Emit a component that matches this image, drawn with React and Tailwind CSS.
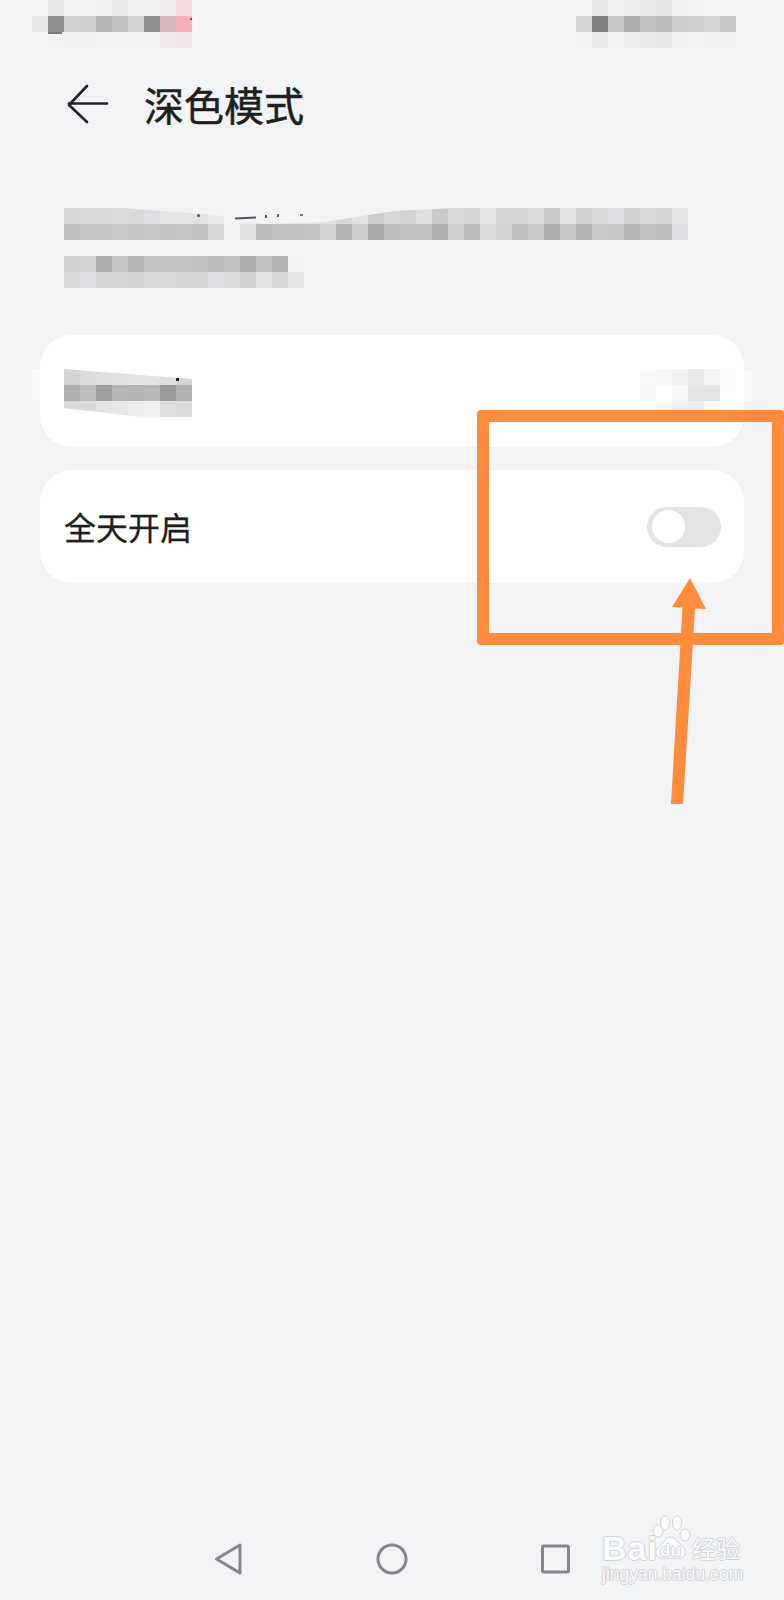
const c = (s) => s.trim().split(/\s+/).map((h) => `#${h}`);

function Mosaic({ rows, className = "" }) {
  return (
    <div className={`flex flex-col ${className}`}>
      {rows.map((row, i) => (
        <div key={i} className="flex h-4">
          {row.map((color, j) => (
            <span key={j} className="block h-4 w-4 shrink-0" style={{ backgroundColor: color }} />
          ))}
        </div>
      ))}
    </div>
  );
}

const statusLeft = [
  c("f2f3f5 e6e7e9 f0f1f3 f0f1f3 eeeff1 e9eaec eeeff1 eeeff1 f1ebed f3dade"),
  c("e6e7e9 8e8f91 cfd0d2 cdcdcf b5b6b8 c0c1c3 d2d3d5 8f9092 d5b8bd f5b0b8"),
  c("f2f3f5 eff1f3 eff0f2 eff0f2 f0f1f3 f0f1f3 f1f2f4 f1f2f4 f1e9eb f3e4e7"),
];
const statusRight = [
  c("f2f3f5 e6e7e9 eff0f2 ecedef e9eaec e4e5e7 eff0f2 f1f2f4 f2f3f5 f2f3f5"),
  c("d4d5d7 7f8082 c6c7c9 acadaf bebfc1 b8b9bb cbccce cdced0 d5d6d8 c6c7c9"),
  c("f0f1f3 e8e9eb f1f2f4 ecedef e9eaec e6e7e9 eff0f2 f1f2f4 eff0f2 eff0f2"),
];
const descLine1 = [
  c("d6d7d9 d8d9db d8d9db dadbdd d8d9db dcdde0 e4e5e7 e2e3e5 e0e1e3 e8e9eb f2f3f5 eeeff1 e2e3e5 e0e1e3 e2e3e5 e0e1e3 dfe0e2 d6d7d9 e1e2e4 cacbcd d6d7d9 d2d3d5 dddee0 c9cacc d8d9db d4d5d7 e4e5e7 d5d6d8 d5d6d8 dadbdd c8c9cb e1e2e4 cfd0d2 d8d9db dcdde0 cfd0d2 d8d9db d5d6d8 e4e5e7"),
  c("bcbdbf c4c5c7 c4c5c7 c8c9cb c4c5c7 c6c7c9 c2c3c5 c4c5c7 bfc0c2 d6d7d9 f0f1f3 dfe0e2 b9babc bebfc1 bfc0c2 c2c3c5 d0d1d3 b3b4b6 cbccce a6a7a9 bbbcbe bebfc1 bebfc1 afb0b2 cdced0 b9babc dadbdd d0d1d3 bdbec0 c8c9cb adaeb0 c7c8ca b2b3b5 c9cacc c6c7c9 b5b6b8 c1c2c4 bbbcbe dcdde0"),
];
const descLine2 = [
  c("cfd0d2 d2d3d5 acadaf c4c5c7 b4b5b7 c2c3c5 c2c3c5 c2c3c5 bfc0c2 b8b9bb c1c2c4 adaeb0 c1c2c4 b2b3b5 f0f1f3"),
  c("d8d9db dcdde0 d4d5d7 d5d6d8 d3d4d6 d9dadc d9dadc d4d5d7 d5d6d8 dcdde0 dadbdd ced0d2 e1e2e4 d6d7d9 e4e5e7"),
];
const cardLeft = [
  c("d4d4d4 dcdcdc dedede e0e0e0 e2e2e2 e2e2e2 dedede d6d6d6"),
  c("b0b0b0 bcbcbc 9f9f9f b6b6b6 b4b4b4 b8b8b8 9a9a9a b2b2b2"),
  c("d8d8d8 dadada e4e4e4 e6e6e6 eeeeee f0f0f0 dedede dcdcdc"),
];
const cardRight = [
  c("fafafa f8f8f8 f0f0f0 e9e9e9 f4f4f4 fcfcfc"),
  c("f7f7f7 ffffff f7f7f7 e4e4e4 e5e5e5 fdfdfd"),
  c("fdfdfd fafafa f2f2f2 eeeeee f9f9f9 ffffff"),
];

const cjk = "font-['Noto_Sans_CJK_SC','Noto_Sans',sans-serif]";
const outline =
  "[text-shadow:1px_0_0_#d4d5d7,-1px_0_0_#d4d5d7,0_1px_0_#d4d5d7,0_-1px_0_#d4d5d7]";

function Watermark() {
  return (
    <div className="absolute left-[602px] top-[1515px] h-[67px] w-[142px] font-['Liberation_Sans',sans-serif] text-[#f9fafb]">
      <div className="relative h-[50px]">
        <span className={`absolute left-0 top-[16px] text-[34px] leading-[34px] font-bold tracking-[1px] ${outline}`}>
          Bai
        </span>
        <svg className="absolute left-[48px] top-0" width="44" height="46" viewBox="0 0 44 46" fill="#f9fafb" stroke="#d4d5d7" strokeWidth="1">
          <ellipse cx="8" cy="16" rx="5" ry="6" />
          <ellipse cx="15" cy="8" rx="4.500" ry="7" />
          <ellipse cx="27" cy="8" rx="4.500" ry="7" />
          <ellipse cx="35" cy="20" rx="5" ry="6" />
          <path d="M20 22c5 0 7 4 11 8 4 4 5 6 4 9-1 4-6 5-14 4-8 1-14 0-15-4-1-4 1-6 5-9 4-3 4-8 9-8z" />
        </svg>
        <span className={`absolute left-[58px] top-[27px] text-[17px] leading-[17px] font-bold ${outline}`}>du</span>
        <span className={`absolute left-[90px] top-[19px] text-[24px] leading-[28px] ${outline} ${cjk}`}>经验</span>
      </div>
      <div className={`mt-[1px] whitespace-nowrap text-[17.500px] leading-[17px] ${outline}`}>jingyan.baidu.com</div>
    </div>
  );
}

export default function App() {
  return (
    <div className={`relative flex h-[1600px] w-[784px] flex-col overflow-hidden bg-[#f2f3f5] ${cjk}`}>
      {/* status bar (pixelated) */}
      <div className="relative flex h-12 items-start justify-between pl-8 pr-12">
        <Mosaic rows={statusLeft} />
        <Mosaic rows={statusRight} />
        <span className="absolute left-[48px] top-[32px] h-[2px] w-[14px] bg-[#77787a]" />
        <span className="absolute left-[190px] top-[18px] h-[2px] w-[2px] bg-[#a03a48]" />
      </div>

      {/* header */}
      <div className="flex h-[114px] items-center gap-8 pl-16">
        <svg width="48" height="48" viewBox="0 0 48 48" fill="none" stroke="#222326" strokeWidth="2.600" strokeLinecap="round" strokeLinejoin="round" className="shrink-0">
          <path d="M23 5 5 24l18 17" />
          <path d="M5 22.500h38" />
        </svg>
        <h1 className="mb-[2px] text-[40px] leading-[48px] font-normal text-[#1e1f21] [-webkit-text-stroke:0.500px_#1e1f21]">深色模式</h1>
      </div>

      {/* description (pixelated) */}
      <div className="relative mt-[46px] flex flex-col gap-4 pl-16">
        <Mosaic rows={descLine1} className="[clip-path:polygon(0_0,60px_0,150px_7px,170px_11px,200px_16px,260px_14px,330px_3px,390px_0,100%_0,100%_100%,0_100%)]" />
        <Mosaic rows={descLine2} />
        <span className="absolute left-[197px] top-[6px] h-[3px] w-[3px] rounded-full bg-[#55565a]" />
        <span className="absolute left-[235px] top-[9px] h-[2px] w-[21px] -rotate-3 bg-[#55565a]" />
        <span className="absolute left-[265px] top-[7px] h-[3px] w-[2px] bg-[#55565a]" />
        <span className="absolute left-[277px] top-[6px] h-[3px] w-[2px] bg-[#66676a]" />
        <span className="absolute left-[300px] top-[6px] h-[2px] w-[3px] bg-[#77787a]" />
      </div>

      {/* cards */}
      <div className="mx-10 mt-[47px] flex flex-col gap-[23px]">
        <div className="relative flex h-[112px] items-start justify-between rounded-[32px] bg-white pl-6 pr-2 pt-[34px]">
          <span className="absolute left-[-8px] top-[34px] h-[31px] w-2 bg-[#f9fafc]" />
          <span className="absolute right-[-8px] top-[35px] h-[31px] w-2 bg-[#f9fafc]" />
          <Mosaic rows={cardLeft} className="[clip-path:polygon(0_0,100%_10px,100%_100%,60%_100%,0_39px)]" />
          <span className="absolute left-[136px] top-[43px] h-[3px] w-[3px] bg-[#2a2a2a]" />
          <Mosaic rows={cardRight} />
        </div>
        <div className="flex h-[113px] items-center justify-between rounded-[32px] bg-white pl-6 pr-[23px]">
          <span className="mb-[2px] text-[32px] leading-[40px] text-[#1e1f21] [-webkit-text-stroke:0.300px_#1e1f21]">全天开启</span>
          <div className="flex h-10 w-[74px] items-center rounded-full bg-[#e4e4e4] pl-[5px]">
            <span className="block h-[33px] w-[33px] rounded-full bg-white" />
          </div>
        </div>
      </div>

      {/* navigation bar */}
      <div className="mb-[25px] mt-auto flex items-center gap-[132px] pl-[212px]">
        <svg width="32" height="32" viewBox="0 0 32 32" fill="none" stroke="#85868a" strokeWidth="3" strokeLinejoin="round" className="shrink-0">
          <path d="M28 2v28L4.500 16z" />
        </svg>
        <svg width="32" height="32" viewBox="0 0 32 32" fill="none" stroke="#85868a" strokeWidth="3" className="shrink-0">
          <circle cx="16" cy="16" r="14" />
        </svg>
        <svg width="32" height="32" viewBox="0 0 32 32" fill="none" stroke="#85868a" strokeWidth="3" strokeLinejoin="round" className="shrink-0">
          <rect x="2.500" y="3" width="26" height="26" rx="1.500" />
        </svg>
      </div>

      <Watermark />

      {/* annotation: orange frame and arrow */}
      <div className="absolute left-[477px] top-[410px] h-[235px] w-[307px] rounded-[4px] border-[12px] border-[#ff8c3c]" />
      <svg className="absolute left-[660px] top-[570px]" width="60" height="240" viewBox="0 0 60 240" fill="#ff8c3c">
        <path d="M30 8 46 39 35 38.500 23 234 11 234 22.500 37.500 12 37z" />
      </svg>
    </div>
  );
}
